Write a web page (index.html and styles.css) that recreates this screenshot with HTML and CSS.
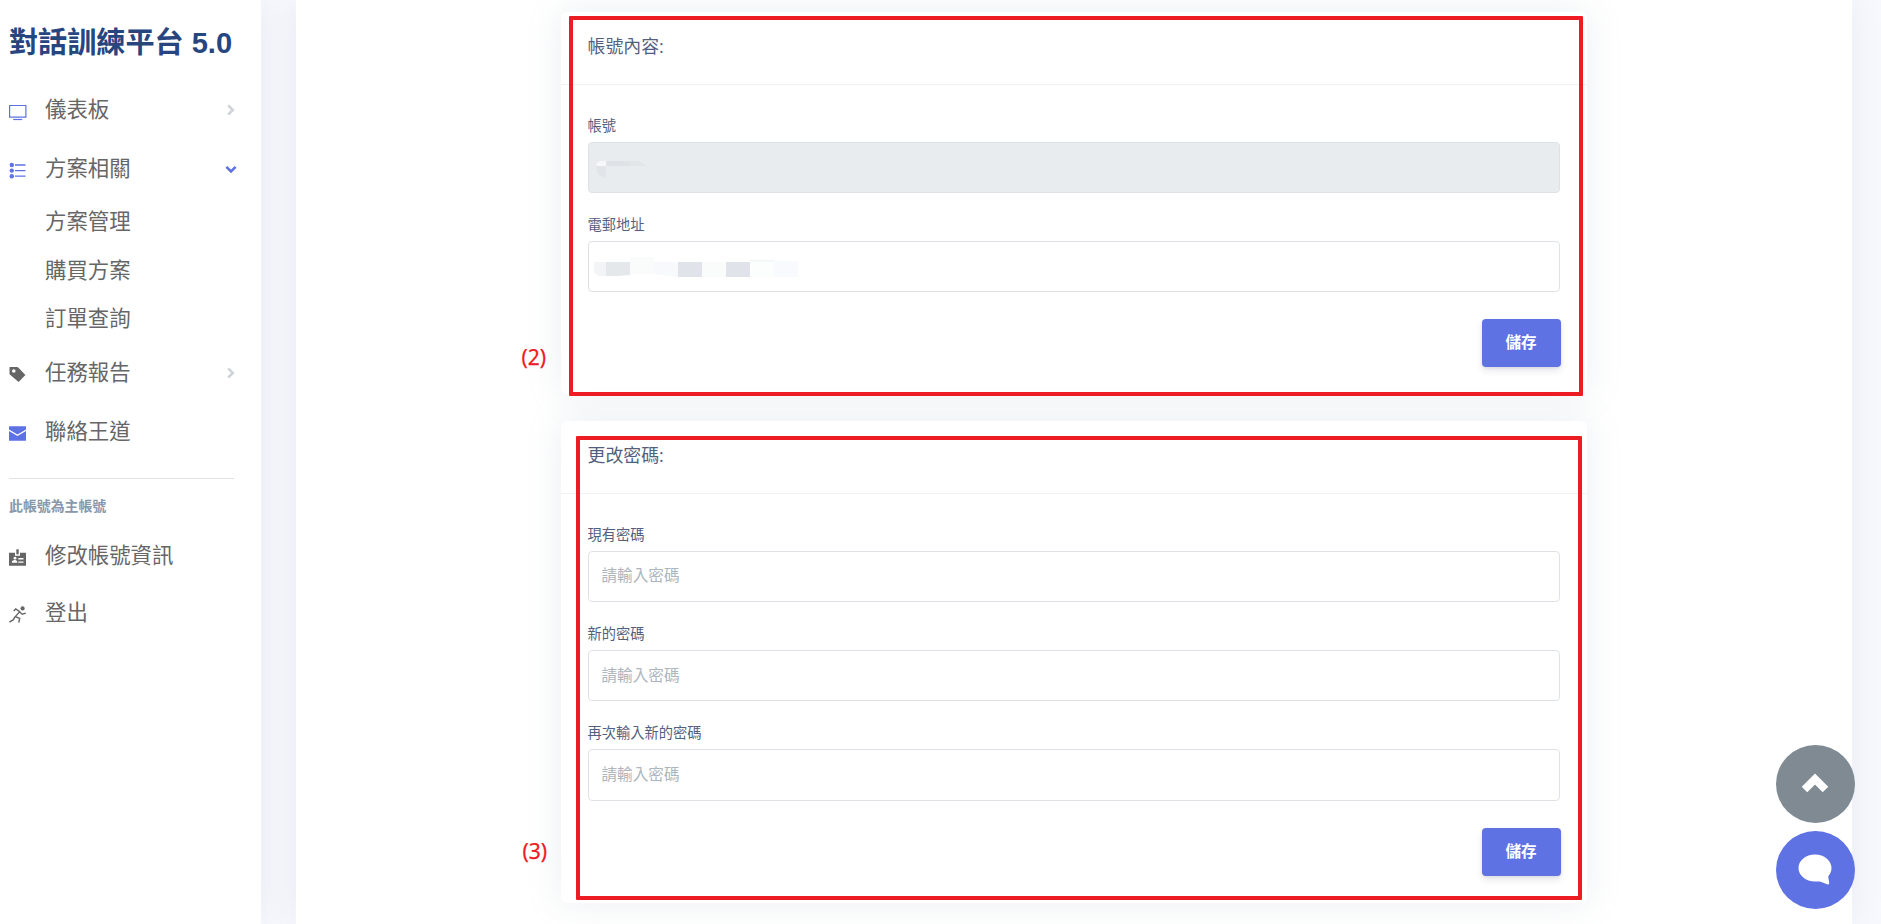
FILE: index.html
```html
<!DOCTYPE html>
<html lang="zh-Hant">
<head>
<meta charset="utf-8">
<title>對話訓練平台 5.0</title>
<link rel="stylesheet" href="styles.css">
</head>
<body>
<aside class="sidebar">
  <h1 class="brand">對話訓練平台 5.0</h1>
  <nav class="nav">
    <a class="nav-item">
      <svg class="icon blue" viewBox="0 0 18 18"><path d="M.6 2.500h16.300v11.700H.6z" fill="none" stroke="currentColor" stroke-width="1.2"/><path d="M4.200 16.500h9" stroke="currentColor" stroke-width="1.2"/></svg>
      <span>儀表板</span>
      <svg class="arrow" viewBox="0 0 12 12"><path d="M3.200 1.400 7.800 6l-4.600 4.600"/></svg>
    </a>
    <a class="nav-item">
      <svg class="icon blue" viewBox="0 0 18 18"><g fill="currentColor"><circle cx="2.800" cy="3" r="2.200"/><circle cx="2.800" cy="8.600" r="2.200"/><circle cx="2.800" cy="14.200" r="2.200"/></g><path d="M6 3h10.500M6 8.600h10.500M6 14.200h10.500" stroke="currentColor" stroke-width="1.300"/></svg>
      <span>方案相關</span>
      <svg class="arrow open" viewBox="0 0 12 12"><path d="M1.400 3.800 6 8.400l4.600-4.600"/></svg>
    </a>
    <a class="nav-item sub"><span>方案管理</span></a>
    <a class="nav-item sub"><span>購買方案</span></a>
    <a class="nav-item sub"><span>訂單查詢</span></a>
    <a class="nav-item">
      <svg class="icon" viewBox="0 0 18 18"><path fill="currentColor" fill-rule="evenodd" d="M.8 1h7.400l1 .5 7.200 7.500-6.800 6.900L.5 8.300V1.500zM4.800 3.200a1.800 1.800 0 1 0 0 3.600 1.800 1.800 0 0 0 0-3.600z"/></svg>
      <span>任務報告</span>
      <svg class="arrow" viewBox="0 0 12 12"><path d="M3.200 1.400 7.800 6l-4.600 4.600"/></svg>
    </a>
    <a class="nav-item">
      <svg class="icon blue" viewBox="0 0 18 18"><path fill="currentColor" d="M.5 1.300h16q.5 0 .5.500v2.800L8.500 9.500 0 4.600V1.800q0-.5.500-.5zM0 6l8.500 4.900L17 6v9.300q0 .5-.5.500H.5q-.5 0-.5-.5z"/></svg>
      <span>聯絡王道</span>
    </a>
  </nav>
  <hr class="divider">
  <p class="caption">此帳號為主帳號</p>
  <nav class="nav">
    <a class="nav-item">
      <svg class="icon" viewBox="0 0 18 18"><path fill="currentColor" d="M0 3.800h6v3h5v-3h6v13H0z"/><path d="M7.300.3h2.400v5H7.300z" fill="currentColor"/><circle cx="6" cy="9.200" r="1.400" fill="#fff"/><path d="M2.800 13.800q0-2.700 3.200-2.700 2.200 0 2.300 2.700zM9.300 9h5.200v1.400H9.300zM9.300 12.400h5.200v1.400H9.300z" fill="#fff"/></svg>
      <span>修改帳號資訊</span>
    </a>
    <a class="nav-item short">
      <svg class="icon" viewBox="0 0 18 18"><circle cx="13.600" cy="2.400" r="2.100" fill="currentColor"/><path d="M4.700 5 6.700 2.900l4 2.700-4.400 5 4.400 1.800-1 4.200M.4 16.200l4-2.500 1.700-3M10.400 5.800l2.800 2.400 3.600-1" fill="none" stroke="currentColor" stroke-width="1.400"/></svg>
      <span>登出</span>
    </a>
  </nav>
</aside>

<main class="panel">
  <div class="cards">
    <section class="card">
      <h2 class="card-title">帳號內容:</h2>
      <form class="card-body">
        <label class="label">帳號</label>
        <div class="field disabled">
          <svg class="mosaic" width="160" height="24"><path d="M7 8h4V3H6Q2 3 1 8z" fill="#f6f7f9"/><path d="M11 3h24v5H11z" fill="#dfe2e6"/><path d="M35 3h5q8 0 11 5H35z" fill="#e2e6e9"/><path d="M1 8h10v12Q1 19 1 8z" fill="#e1e4e8"/></svg>
        </div>
        <label class="label">電郵地址</label>
        <div class="field">
          <svg class="mosaic email" width="206" height="24"><path d="M12 6V20H6Q0 19 0 13V6z" fill="#f3f4f6"/><path d="M12 6h24v13l-12 1H12z" fill="#e4e8eb"/><path d="M36 1h24v17H36z" fill="#fafbfb"/><path d="M60 6h24v15L60 18z" fill="#f8f9fc"/><path d="M84 6h24v15H84z" fill="#e0e3e9"/><path d="M108 6h24v15h-24z" fill="#fafcfb"/><path d="M132 6h24v15h-24z" fill="#e0e3e9"/><path d="M156 4h24v17h-24z" fill="#fcfdfd"/><path d="M156 4h24v1.500h-24z" fill="#f3f4f6"/><path d="M180 5h24v16h-24z" fill="#f9fafd"/></svg>
        </div>
        <button class="save" type="button">儲存</button>
      </form>
    </section>
    <section class="card">
      <h2 class="card-title">更改密碼:</h2>
      <form class="card-body">
        <label class="label">現有密碼</label>
        <input class="field raised" type="password" placeholder="請輸入密碼">
        <label class="label">新的密碼</label>
        <input class="field" type="password" placeholder="請輸入密碼">
        <label class="label">再次輸入新的密碼</label>
        <input class="field last" type="password" placeholder="請輸入密碼">
        <button class="save" type="button">儲存</button>
      </form>
    </section>
  </div>
</main>

<div class="mark mark-account"></div>
<div class="mark mark-password"></div>
<span class="mark-text two">(2)</span>
<span class="mark-text three">(3)</span>

<div class="floating">
  <a class="round top"><svg width="30" height="24" viewBox="0 0 30 24"><path d="m4.500 17.500 10.500-10.500 10.500 10.500" fill="none" stroke="#fff" stroke-width="7.800"/></svg></a>
  <a class="round chat"><svg width="36" height="34" viewBox="0 0 36 34"><path fill="#fff" d="M18 1.500c9.200 0 16.500 6 16.500 13.500 0 3.300-1.300 6.200-3.300 8.400l1 6.800q0 1.500-1.500 1.200L23 28.500H18C8.800 28.500 1.500 22.500 1.500 15S8.800 1.500 18 1.500z"/></svg></a>
</div>
</body>
</html>
```

FILE: styles.css
```css
* { box-sizing: border-box; }

body {
  margin: 0;
  height: 924px;
  overflow: hidden;
  display: flex;
  background: #f8f9fe;
  font-family: "Open Sans", "Noto Sans CJK TC", sans-serif;
  color: #525f7f;
}

.sidebar {
  width: 261px;
  flex: none;
  padding: 0 27px 0 9px;
  background: #fff;
  box-shadow: 0 0 35px rgba(136, 152, 170, .15);
}

.brand {
  margin: 0;
  height: 81px;
  font: 700 29.100px/86px "Liberation Sans", "Noto Sans CJK TC", sans-serif;
  color: #27457f;
  white-space: nowrap;
}

.nav { display: flex; flex-direction: column; }

.nav-item {
  display: flex;
  align-items: center;
  height: 58.6px;
  font-size: 21.4px;
  line-height: 32px;
  color: #666;
}

.nav-item span { flex: 1; padding-bottom: 2px; white-space: nowrap; }
.nav-item.sub { height: 48.500px; padding-left: 36px; }
.nav-item.short { height: 56px; }

.icon { width: 18px; height: 18px; margin: 4px 18px 0 0; color: #666; overflow: visible; }
.blue { color: #5e72e4; }

.arrow {
  width: 12px;
  height: 12px;
  margin-right: -3px;
  fill: none;
  stroke: #ced4da;
  stroke-width: 2.600;
}
.arrow.open { stroke: #5e72e4; }

.divider { margin: 17px 0 0; border: 0; border-top: 1px solid #e2e2e2; }

.caption {
  margin: 16px 0 10px;
  font-size: 13.9px;
  line-height: 22px;
  font-weight: 700;
  color: #8898aa;
}

.panel {
  width: 1556px;
  flex: none;
  margin-left: 35px;
  padding: 12px 0 0 265px;
  background: #fff;
  box-shadow: 0 0 35px rgba(136, 152, 170, .15);
}

.cards {
  width: 1026px;
  display: flex;
  flex-direction: column;
  gap: 27px;
}

.card {
  border-radius: 6px;
  background: #fff;
  box-shadow: 0 0 35px rgba(136, 152, 170, .17);
}

.card-title {
  margin: 0;
  height: 73px;
  padding: 21px 26.500px 0;
  border-bottom: 1px solid #f0f1f2;
  font-size: 17.9px;
  line-height: 27px;
  font-weight: 400;
  color: #525f7f;
}

.card-body {
  display: flex;
  flex-direction: column;
  padding: 9px 27px 27px;
}

.label {
  height: 48px;
  padding-top: 21px;
  margin-left: -.5px;
  font-size: 14.25px;
  line-height: 22px;
}

.field {
  width: 972px;
  height: 51px;
  padding: 0 12.500px 2px;
  border: 1px solid #dee2e6;
  border-radius: 4px;
  background: #fff;
  font: 400 15.6px/24px "Open Sans", "Noto Sans CJK TC", sans-serif;
}
.field::placeholder { color: #adb5bd; opacity: 1; }
.field.disabled { background: #e9ecef; }
.field.raised { padding-bottom: 4px; }
.field.last { height: 52px; }

.mosaic { display: block; margin: 15px 0 0 -6.500px; }
.mosaic.email { margin: 14px 0 0 -7.500px; }

.save {
  width: 79px;
  height: 48px;
  margin: 27px -1px 0 0;
  align-self: flex-end;
  padding: 0 1px 2px 0;
  border: 0;
  border-radius: 4px;
  background: #5e72e4;
  color: #fff;
  font: 700 15.6px/24px "Open Sans", "Noto Sans CJK TC", sans-serif;
  box-shadow: 0 4px 7px rgba(50, 50, 93, .11), 0 1px 3px rgba(0, 0, 0, .08);
}

/* Annotation overlay */
.mark { position: absolute; border: 4px solid #ed1c24; border-radius: 1px; }
.mark-account { left: 569px; top: 16px; width: 1014px; height: 380px; }
.mark-password { left: 576px; top: 436px; width: 1006px; height: 464px; }
.mark-text {
  position: absolute;
  font: 400 21px/28px "Noto Sans", sans-serif;
  color: #ed1c24;
  -webkit-text-stroke: .25px #ed1c24;
}
.two { left: 521.500px; top: 343px; }
.three { left: 522.500px; top: 837px; }

.floating {
  position: absolute;
  left: 1776px;
  top: 745px;
  display: flex;
  flex-direction: column;
  gap: 8px;
}
.round {
  width: 79px;
  height: 78px;
  padding-right: 1px;
  border-radius: 50%;
  display: flex;
  align-items: center;
  justify-content: center;
}
.top { background: #7f8a92; }
.chat { background: #5e72e4; }
```
